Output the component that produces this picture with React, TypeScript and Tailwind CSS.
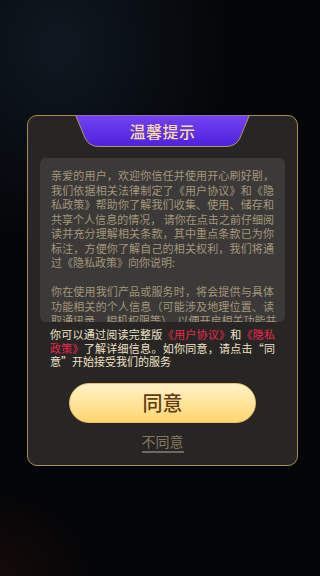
const CJK = 'font-["Noto_Sans_CJK_SC","Noto_Sans",sans-serif]';

// full lines are stretched to the box width, like the reference
const introLines: { text: string; full: boolean }[] = [
  { text: '亲爱的用户，欢迎你信任并使用开心刷好剧，', full: true },
  { text: '我们依据相关法律制定了《用户协议》和《隐', full: true },
  { text: '私政策》帮助你了解我们收集、使用、储存和', full: true },
  { text: '共享个人信息的情况， 请你在点击之前仔细阅', full: true },
  { text: '读并充分理解相关条款，其中重点条款已为你', full: true },
  { text: '标注，方便你了解自己的相关权利，我们将通', full: true },
  { text: '过《隐私政策》向你说明:', full: false },
  { text: '\u00a0', full: false },
  { text: '你在使用我们产品或服务时，将会提供与具体', full: true },
  { text: '功能相关的个人信息（可能涉及地理位置、读', full: true },
  { text: '取通讯录、相机权限等），以便开启相关功能并', full: true },
  { text: '为你提供更好的服务体验。', full: false },
];

function TitleTab() {
  return (
    <div className="relative mx-auto -mt-px h-[32px] w-[175px] flex items-center justify-center">
      <svg className="absolute inset-0" width="175" height="32" viewBox="0 0 175 32">
        <defs>
          <linearGradient id="tabFill" x1="0" y1="0" x2="0" y2="1">
            <stop offset="0" stopColor="#7444f4" />
            <stop offset="1" stopColor="#4d20da" />
          </linearGradient>
        </defs>
        <path
          d="M0.5 0 H174.5 L165 23 Q161 31.5 151 31.5 H24 Q14 31.5 10 23 Z"
          fill="url(#tabFill)"
          stroke="#b4955e"
          strokeWidth="1"
        />
      </svg>
      <span className={`relative text-[16px] font-medium leading-none tracking-[0.5px] text-[#f7dca2] ${CJK}`}>
        温馨提示
      </span>
    </div>
  );
}

export default function App() {
  return (
    <div className="min-h-[576px] w-full bg-[#040507] bg-[radial-gradient(ellipse_55%_35%_at_18%_8%,#0f1821_0%,transparent_100%),radial-gradient(ellipse_30%_15%_at_0%_100%,#140a0a_0%,transparent_100%)] pt-[115px] pl-[27px]">
      <div className="w-[271px] rounded-[10px] border border-[#a98b52] bg-[#272624] pb-[12px]">
        <TitleTab />

        {/* policy scroll box */}
        <div className="mx-3 mt-[11px] h-[164px] overflow-hidden rounded-[6px] bg-[#3b3a38] px-[11px] pt-[10px]">
          {introLines.map((line, i) => (
            <div
              key={i}
              className={`whitespace-nowrap text-[11px] leading-[14.5px] text-[#a4967a] ${CJK} ${
                line.full ? 'text-justify [text-align-last:justify]' : ''
              }`}
            >
              {line.text}
            </div>
          ))}
        </div>

        {/* consent note */}
        <div className={`mx-[22px] mt-[6px] text-[11px] leading-[13.5px] text-[#efe2c4] ${CJK}`}>
          <div className="whitespace-nowrap text-justify [text-align-last:justify]">
            你可以通过阅读完整版<span className="text-[#e8284c]">《用户协议》</span>和<span className="text-[#e8284c]">《隐私</span>
          </div>
          <div className="whitespace-nowrap text-justify [text-align-last:justify]">
            <span className="text-[#e8284c]">政策》</span>了解详细信息。如你同意，请点击“同
          </div>
          <div className="whitespace-nowrap">意”开始接受我们的服务</div>
        </div>

        <button
          className={`mx-auto mt-[14.5px] flex h-[40px] w-[187px] items-center justify-center rounded-full border border-[#e9c070] bg-gradient-to-b from-[#fff2c6] to-[#ffd66c] text-[20px] font-medium text-[#5e3c12] ${CJK}`}
        >
          同意
        </button>

        <div className="mt-[8px] flex justify-center">
          <span className={`border-b-2 border-[#6c6a66] text-[14px] leading-[20px] text-[#85785e] ${CJK}`}>
            不同意
          </span>
        </div>
      </div>
    </div>
  );
}
